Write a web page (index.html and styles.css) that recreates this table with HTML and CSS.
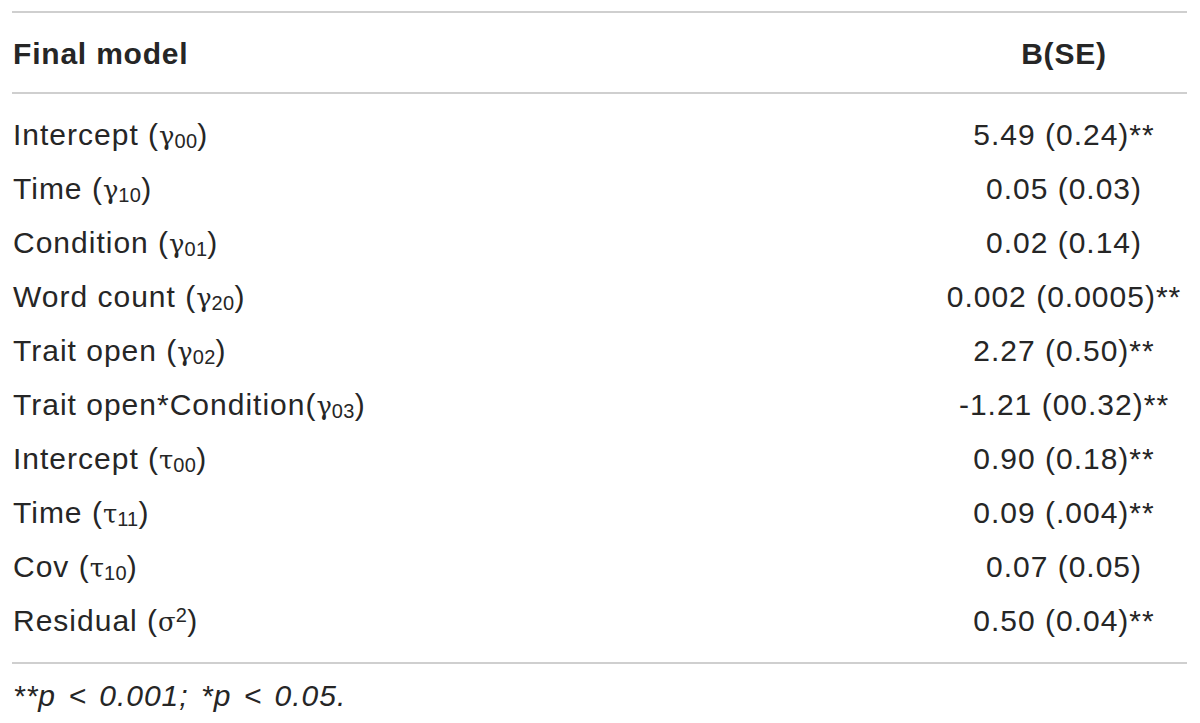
FILE: index.html
```html
<!DOCTYPE html>
<html>
<head>
<meta charset="utf-8">
<link rel="stylesheet" href="styles.css">
</head>
<body>
<div class="wrap">
<table class="model">
<thead>
<tr><th class="label">Final model</th><th class="val">B(SE)</th></tr>
</thead>
<tbody>
<tr class="first"><td class="label">Intercept (<span class="g">γ</span><sub>00</sub>)</td><td class="val">5.49 (0.24)<span class="ast">**</span></td></tr>
<tr><td class="label">Time (<span class="g">γ</span><sub>10</sub>)</td><td class="val">0.05 (0.03)</td></tr>
<tr><td class="label">Condition (<span class="g">γ</span><sub>01</sub>)</td><td class="val">0.02 (0.14)</td></tr>
<tr><td class="label">Word count (<span class="g">γ</span><sub>20</sub>)</td><td class="val">0.002 (0.0005)<span class="ast">**</span></td></tr>
<tr><td class="label">Trait open (<span class="g">γ</span><sub>02</sub>)</td><td class="val">2.27 (0.50)<span class="ast">**</span></td></tr>
<tr><td class="label">Trait open<span class="ast">*</span>Condition(<span class="g">γ</span><sub>03</sub>)</td><td class="val">-1.21 (00.32)<span class="ast">**</span></td></tr>
<tr><td class="label">Intercept (<span class="g">τ</span><sub>00</sub>)</td><td class="val">0.90 (0.18)<span class="ast">**</span></td></tr>
<tr><td class="label">Time (<span class="g">τ</span><sub>11</sub>)</td><td class="val">0.09 (.004)<span class="ast">**</span></td></tr>
<tr><td class="label">Cov (<span class="g">τ</span><sub>10</sub>)</td><td class="val">0.07 (0.05)</td></tr>
<tr class="last"><td class="label">Residual (<span class="g">σ</span><sup>2</sup>)</td><td class="val">0.50 (0.04)<span class="ast">**</span></td></tr>
</tbody>
</table>
<p class="note"><span class="ast">**</span>p &lt; 0.001; <span class="ast">*</span>p &lt; 0.05.</p>
</div>
</body>
</html>
```

FILE: styles.css
```css
html, body {
  margin: 0;
  padding: 0;
  background: #ffffff;
}
body {
  font-family: "Liberation Sans", Arial, sans-serif;
  color: #262626;
  font-size: 30px;
  letter-spacing: 1px;
}
.wrap {
  padding: 11px 13px 0 12px;
}
.model {
  width: 100%;
  border-collapse: collapse;
  border-top: 2px solid #cfcfcf;
  border-bottom: 2px solid #cfcfcf;
}
.model th, .model td {
  padding: 0;
  line-height: 54px;
  height: 54px;
  vertical-align: middle;
  white-space: nowrap;
}
.model th {
  font-weight: bold;
  letter-spacing: 0.8px;
  padding-top: 14px;
  padding-bottom: 11px;
  border-bottom: 2px solid #cfcfcf;
}
.label {
  text-align: left;
  padding-left: 1px !important;
}
.val {
  width: 246px;
  text-align: center;
}
.model tr.first td {
  padding-top: 14px;
}
.model tr.last td {
  padding-bottom: 14px;
}
.g {
  font-family: "DejaVu Serif", "Liberation Serif", serif;
  font-size: 0.86em;
  line-height: 1;
  letter-spacing: 0;
}
sub, sup {
  font-size: 20px;
  line-height: 1;
  letter-spacing: 0.3px;
}
sub {
  vertical-align: -3px;
}
sup {
  vertical-align: 9px;
}
.ast {
  line-height: 1;
}
.note {
  margin: 5px 0 0 1px;
  font-style: italic;
  line-height: 54px;
  word-spacing: 3px;
}
```
